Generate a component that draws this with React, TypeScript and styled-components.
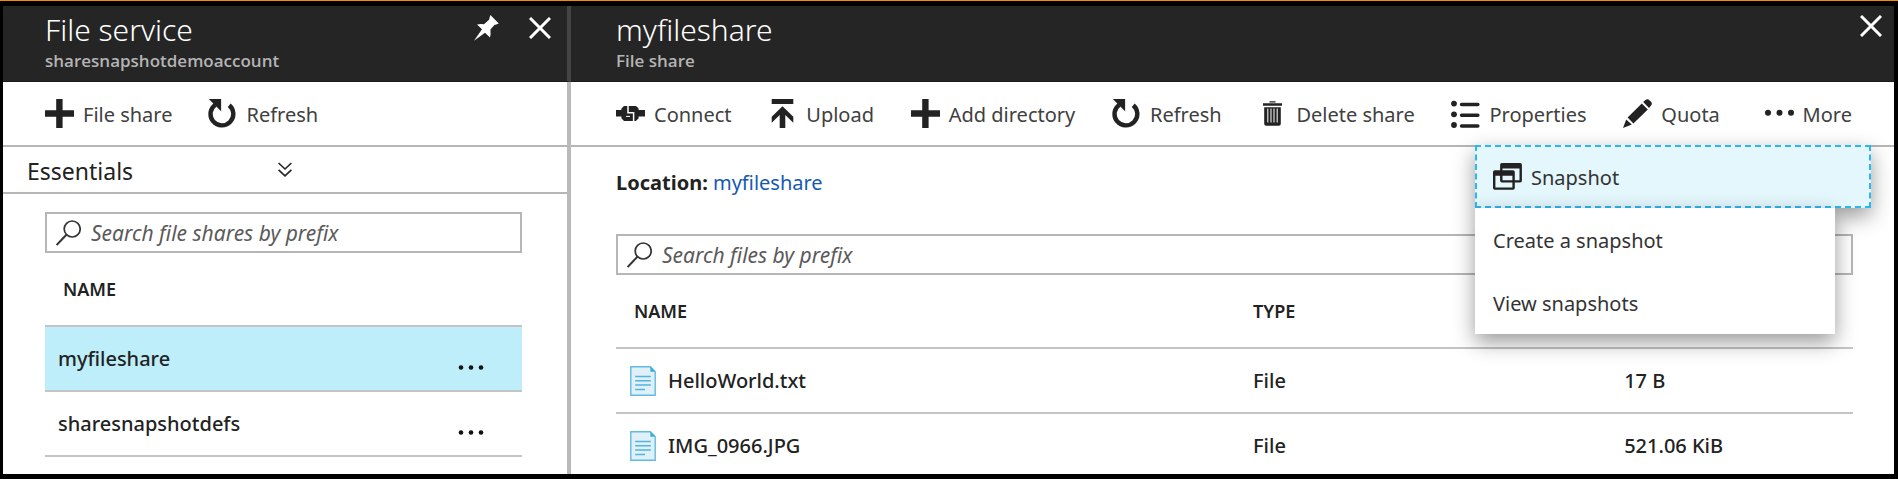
import React from 'react';
import styled, { createGlobalStyle } from 'styled-components';

const ink = '#222';
const line = '#b6b6b6';
const shadow = '0 8px 20px rgba(0, 0, 0, 0.4)';

const GlobalStyle = createGlobalStyle`
  * { box-sizing: border-box; }
  body {
    margin: 0;
    background: #000;
    color: ${ink};
    font: 400 20px/28px 'Noto Sans', 'Open Sans', sans-serif;
  }
  button {
    border: 0;
    padding: 0;
    background: none;
    color: inherit;
    font: inherit;
    cursor: pointer;
  }
  svg { display: block; flex: none; }
`;

const Frame = styled.div`
  display: flex;
  flex-direction: column;
  min-height: 100vh;
  border-top: 1px solid #f58b00;
`;

const Page = styled.div`
  display: flex;
  flex: 1;
  border: solid #000;
  border-width: 5px 4px 5px 3px;
  background: #fff;
`;

const Blade = styled.section<{ $side?: boolean }>`
  display: flex;
  flex-direction: column;
  flex: ${(p) => (p.$side ? '0 0 568px' : '1 1 0')};
  min-width: 0;
`;

const BladeHeader = styled.header<{ $side?: boolean }>`
  display: flex;
  justify-content: space-between;
  align-items: flex-start;
  padding: ${(p) => (p.$side ? '4px 16px 9px 42px' : '4px 12px 9px 45px')};
  background: #252525;
  color: #fff;
  border-bottom: 1px solid #191919;
  border-right: ${(p) => (p.$side ? '4px solid #444' : '0')};
`;

const Title = styled.h1`
  margin: 0;
  font-size: 30px;
  line-height: 40px;
  font-weight: 300;
`;

const Subtitle = styled.p`
  margin: 0;
  font-family: 'Open Sans', 'Noto Sans', sans-serif;
  font-size: 17px;
  line-height: 22px;
  font-weight: 600;
  color: #b4b4b4;
`;

const HeaderActions = styled.div`
  display: flex;
  align-items: center;
  gap: 30px;
  padding-top: 5px;
`;

const BladeBody = styled.div<{ $side?: boolean }>`
  flex: 1;
  border-right: ${(p) => (p.$side ? '4px solid #bababa' : '0')};
`;

const Toolbar = styled.div<{ $side?: boolean }>`
  position: relative;
  display: flex;
  align-items: center;
  justify-content: ${(p) => (p.$side ? 'flex-start' : 'space-between')};
  gap: ${(p) => (p.$side ? '36px' : '0')};
  height: 65px;
  padding: ${(p) => (p.$side ? '0 45px 0 42px' : '0 42px 0 45px')};
  border-bottom: 2px solid ${line};
`;

const Command = styled.button<{ $apart?: boolean }>`
  display: flex;
  align-items: center;
  gap: 9px;
  margin-left: ${(p) => (p.$apart ? '8px' : '0')};
  white-space: nowrap;
  color: #404040;
`;

const Label = styled.span`
  padding-top: 2px;
`;

const Essentials = styled.button`
  display: grid;
  grid-template-columns: 1fr auto 1fr;
  align-items: center;
  width: 100%;
  height: 47px;
  border-bottom: 2px solid ${line};
  font-size: 23px;
  text-align: left;
`;

const EssentialsLabel = styled.span`
  padding: 2px 0 0 24px;
`;

const Content = styled.div<{ $side?: boolean }>`
  padding: ${(p) => (p.$side ? '18px 45px 0 42px' : '22px 41px 0 45px')};
`;

const Location = styled.p`
  margin: 0 0 37px;
`;

const ShareLink = styled.a`
  color: #1459b3;
  text-decoration: none;
`;

const SearchBox = styled.label`
  display: flex;
  align-items: center;
  gap: 10px;
  height: 41px;
  padding: 0 9px;
  border: 2px solid ${line};
`;

const SearchInput = styled.input`
  flex: 1;
  min-width: 0;
  border: 0;
  padding: 0;
  outline: 0;
  background: none;
  font: italic 21px/28px 'Noto Sans', 'Open Sans', sans-serif;
  color: ${ink};
  &::placeholder { color: #5a5a5a; opacity: 1; }
`;

const Table = styled.table`
  width: 100%;
  table-layout: fixed;
  border-collapse: separate;
  border-spacing: 0;
  text-align: left;
`;

const Th = styled.th<{ $width?: string; $lead?: boolean }>`
  width: ${(p) => p.$width ?? 'auto'};
  padding: ${(p) => (p.$lead ? '24px 0 24px 18px' : '24px 0')};
  border-bottom: 2px solid #c4c4c4;
  font-size: 18px;
  line-height: 24px;
  font-weight: 600;
`;

const Row = styled.tr<{ $selected?: boolean }>`
  background: ${(p) => (p.$selected ? '#bdeefa' : 'transparent')};
`;

const Td = styled.td<{ $last?: boolean }>`
  padding: ${(p) => (p.$last ? '18px 0 14px' : '18px 0 17px')};
  border-bottom: ${(p) => (p.$last ? '0' : '2px solid #c4c4c4')};
  font-weight: 500;
`;

const NameCell = styled.div`
  display: flex;
  align-items: center;
  justify-content: space-between;
  padding: 0 38px 0 13px;
`;

const FileCell = styled.div`
  display: flex;
  align-items: center;
  gap: 12px;
  height: 28px;
  padding-left: 14px;
`;

const Menu = styled.div`
  position: absolute;
  top: 63px;
  right: 23px;
  z-index: 2;
  width: 396px;
  color: #333;
`;

const MenuHead = styled.button`
  display: flex;
  align-items: center;
  gap: 9px;
  width: 100%;
  height: 63px;
  padding: 0 16px;
  border: 2px dashed #2bb8f0;
  background: #e3f7fd;
  box-shadow: ${shadow};
`;

const SubMenu = styled.div`
  position: relative;
  width: 360px;
  background: #fff;
  box-shadow: ${shadow};
`;

const MenuItem = styled.button`
  display: flex;
  align-items: center;
  width: 100%;
  height: 63px;
  padding: 0 18px;
`;

const Icon = ({ children, w = 29, h = 29 }: { children: React.ReactNode; w?: number; h?: number }) => (
  <svg width={w} height={h} viewBox={`0 0 ${w} ${h}`} fill={ink} aria-hidden="true">
    {children}
  </svg>
);

const PlusIcon = () => (
  <Icon><path d="M11.2 0h6.4v11.3H29v6.4H17.6V29h-6.4V17.7H0v-6.4h11.2z" /></Icon>
);
const RefreshIcon = () => (
  <Icon>
    <path d="M21.2 6.2A11.4 11.4 0 1 1 7.3 5.7" fill="none" stroke={ink} strokeWidth="4.4" />
    <path d="M0.8 0h12.3v12.2z" />
  </Icon>
);
const ConnectIcon = () => (
  <Icon>
    <path d="M0 11h5.4V9.6L8 7h12l2.6 2.6V11H29v6.6h-6.4v1.6L20 22H8l-2.6-2.8v-1.6H0z" />
    <path d="M12 6.5v7.3h5.6V22" fill="none" stroke="#fff" strokeWidth="1.5" />
    <path d="M10 17.4h4" fill="none" stroke="#fff" strokeWidth="1" />
  </Icon>
);
const UploadIcon = () => (
  <Icon>
    <path d="M3.7 0h21.6v5H3.7z" />
    <path d="M14.5 7.3l10.8 10.4v6L17.3 16v13h-5.6V16l-8 7.7v-6z" />
  </Icon>
);
const TrashIcon = () => (
  <Icon>
    <path d="M11.5 2.2h6v1.4h-6zM5 4.2h19v2.6H5zM6.2 8.2h16.6v16.6q0 2-2 2H8.2q-2 0-2-2z" />
    <path d="M9.8 9.6v14M13 9.6v14M16 9.6v14M19.2 9.6v14" fill="none" stroke="#ddd" strokeWidth="1.2" />
  </Icon>
);
const PropertiesIcon = () => (
  <Icon>
    <circle cx="3" cy="4.6" r="2.9" /><circle cx="3" cy="15.3" r="2.9" /><circle cx="3" cy="26" r="2.9" />
    <path d="M10.5 5.5h16.4M10.5 16.3h16.4M10.5 27h16.4" stroke={ink} strokeWidth="3.4" strokeLinecap="round" />
  </Icon>
);
const PencilIcon = () => (
  <Icon>
    <path d="M0 29l3.2-8.6 5.6 5.2zM4.6 18.4L18.8 4.4l6 6-14.4 14zM20.2 3l2.2-2q2-1.6 4 .2l1.4 1.4q2 2 .2 4L26 9z" />
  </Icon>
);
const MoreIcon = () => (
  <Icon><circle cx="3" cy="13.7" r="3" /><circle cx="14.5" cy="13.7" r="3" /><circle cx="26" cy="13.7" r="3" /></Icon>
);
const SnapshotIcon = () => (
  <Icon h={27}>
    <g fill="none" stroke={ink} strokeWidth="2.4">
      <rect x="8.3" y="1.2" width="19.4" height="17.2" rx="0.6" />
      <rect x="1.2" y="8.4" width="19.4" height="17.2" rx="0.6" />
    </g>
    <path d="M8 1h20v4.6H8zM1 8h20v4.8H1z" />
  </Icon>
);
const PinIcon = () => (
  <svg width="25" height="26" viewBox="0 0 25 26" fill="#fff" aria-hidden="true">
    <path d="M16.4 0l8.4 8.4-2.6 1q-1.2 0-1.8.5l-4 4.6q.6 4.2-.4 8l-5-4.8L0 25.8l8-11.6-5-4.6q3-1.2 7-.4l5-4.4q.6-.8.5-2z" />
  </svg>
);
const CloseIcon = () => (
  <svg width="22" height="22" viewBox="0 0 22 22" aria-hidden="true">
    <path d="M1 1l20 20M21 1L1 21" stroke="#fff" strokeWidth="3" />
  </svg>
);
const ChevronsIcon = () => (
  <svg width="14" height="15" viewBox="0 0 14 15" fill="none" stroke={ink} strokeWidth="1.6" aria-hidden="true">
    <path d="M.6 1L7 7l6.4-6M.6 7.8L7 13.8l6.4-6" />
  </svg>
);
const SearchIcon = () => (
  <svg width="25" height="26" viewBox="0 0 25 26" fill="none" stroke="#333" strokeWidth="1.7" aria-hidden="true">
    <circle cx="16.2" cy="9" r="8" />
    <path d="M10.4 14.8L.6 25" strokeWidth="2" />
  </svg>
);
const EllipsisIcon = () => (
  <svg width="26" height="28" viewBox="0 0 26 28" fill="#111" aria-hidden="true">
    <circle cx="3" cy="22.5" r="2.3" /><circle cx="13" cy="22.5" r="2.3" /><circle cx="23" cy="22.5" r="2.3" />
  </svg>
);
const FileIcon = () => (
  <svg width="26" height="30" viewBox="0 0 26 30" aria-hidden="true">
    <path d="M.8.8h19.6l4.8 5v23.4H.8z" fill="#dff0f8" stroke="#62bbe0" strokeWidth="1.4" />
    <path d="M20.4.6v5.2h5z" fill="#3fa9d6" />
    <path d="M5.2 10.5h15.6M5.2 14.7h15.6M5.2 19h15.6M5.2 23.6h9.8" stroke="#52b4de" strokeWidth="1.5" />
  </svg>
);

const commands = [
  { label: 'Connect', icon: <ConnectIcon /> },
  { label: 'Upload', icon: <UploadIcon /> },
  { label: 'Add directory', icon: <PlusIcon /> },
  { label: 'Refresh', icon: <RefreshIcon /> },
  { label: 'Delete share', icon: <TrashIcon /> },
  { label: 'Properties', icon: <PropertiesIcon /> },
  { label: 'Quota', icon: <PencilIcon /> },
  { label: 'More', icon: <MoreIcon />, apart: true },
];

const shares = ['myfileshare', 'sharesnapshotdefs'];

const files = [
  { name: 'HelloWorld.txt', type: 'File', size: '17 B' },
  { name: 'IMG_0966.JPG', type: 'File', size: '521.06 KiB' },
];

const FileServiceBlade = () => (
  <Blade $side>
    <BladeHeader $side>
      <div>
        <Title>File service</Title>
        <Subtitle>sharesnapshotdemoaccount</Subtitle>
      </div>
      <HeaderActions>
        <button aria-label="Pin"><PinIcon /></button>
        <button aria-label="Close"><CloseIcon /></button>
      </HeaderActions>
    </BladeHeader>
    <BladeBody $side>
      <Toolbar $side>
        <Command><PlusIcon /><Label>File share</Label></Command>
        <Command><RefreshIcon /><Label>Refresh</Label></Command>
      </Toolbar>
      <Essentials>
        <EssentialsLabel>Essentials</EssentialsLabel>
        <ChevronsIcon />
      </Essentials>
      <Content $side>
        <SearchBox>
          <SearchIcon />
          <SearchInput type="text" aria-label="Search file shares" placeholder="Search file shares by prefix" />
        </SearchBox>
        <Table>
          <thead>
            <tr><Th $lead>NAME</Th></tr>
          </thead>
          <tbody>
            {shares.map((name, i) => (
              <Row key={name} $selected={i === 0}>
                <Td>
                  <NameCell>
                    {name}
                    <button aria-label={`Actions for ${name}`}><EllipsisIcon /></button>
                  </NameCell>
                </Td>
              </Row>
            ))}
          </tbody>
        </Table>
      </Content>
    </BladeBody>
  </Blade>
);

const ShareBlade = () => (
  <Blade>
    <BladeHeader>
      <div>
        <Title>myfileshare</Title>
        <Subtitle>File share</Subtitle>
      </div>
      <HeaderActions>
        <button aria-label="Close"><CloseIcon /></button>
      </HeaderActions>
    </BladeHeader>
    <BladeBody>
      <Toolbar>
        {commands.map((c) => (
          <Command key={c.label} $apart={c.apart}>{c.icon}<Label>{c.label}</Label></Command>
        ))}
        <Menu>
          <MenuHead><SnapshotIcon /><Label>Snapshot</Label></MenuHead>
          <SubMenu>
            <MenuItem><Label>Create a snapshot</Label></MenuItem>
            <MenuItem><Label>View snapshots</Label></MenuItem>
          </SubMenu>
        </Menu>
      </Toolbar>
      <Content>
        <Location>
          <b>Location:</b> <ShareLink href="#myfileshare">myfileshare</ShareLink>
        </Location>
        <SearchBox>
          <SearchIcon />
          <SearchInput type="text" aria-label="Search files" placeholder="Search files by prefix" />
        </SearchBox>
        <Table>
          <thead>
            <tr>
              <Th $lead $width="51.5%">NAME</Th>
              <Th $width="30%">TYPE</Th>
              <Th aria-label="Size" />
            </tr>
          </thead>
          <tbody>
            {files.map((f, i) => {
              const last = i === files.length - 1;
              return (
                <Row key={f.name}>
                  <Td $last={last}><FileCell><FileIcon />{f.name}</FileCell></Td>
                  <Td $last={last}>{f.type}</Td>
                  <Td $last={last}>{f.size}</Td>
                </Row>
              );
            })}
          </tbody>
        </Table>
      </Content>
    </BladeBody>
  </Blade>
);

export default function App() {
  return (
    <Frame>
      <GlobalStyle />
      <Page>
        <FileServiceBlade />
        <ShareBlade />
      </Page>
    </Frame>
  );
}
